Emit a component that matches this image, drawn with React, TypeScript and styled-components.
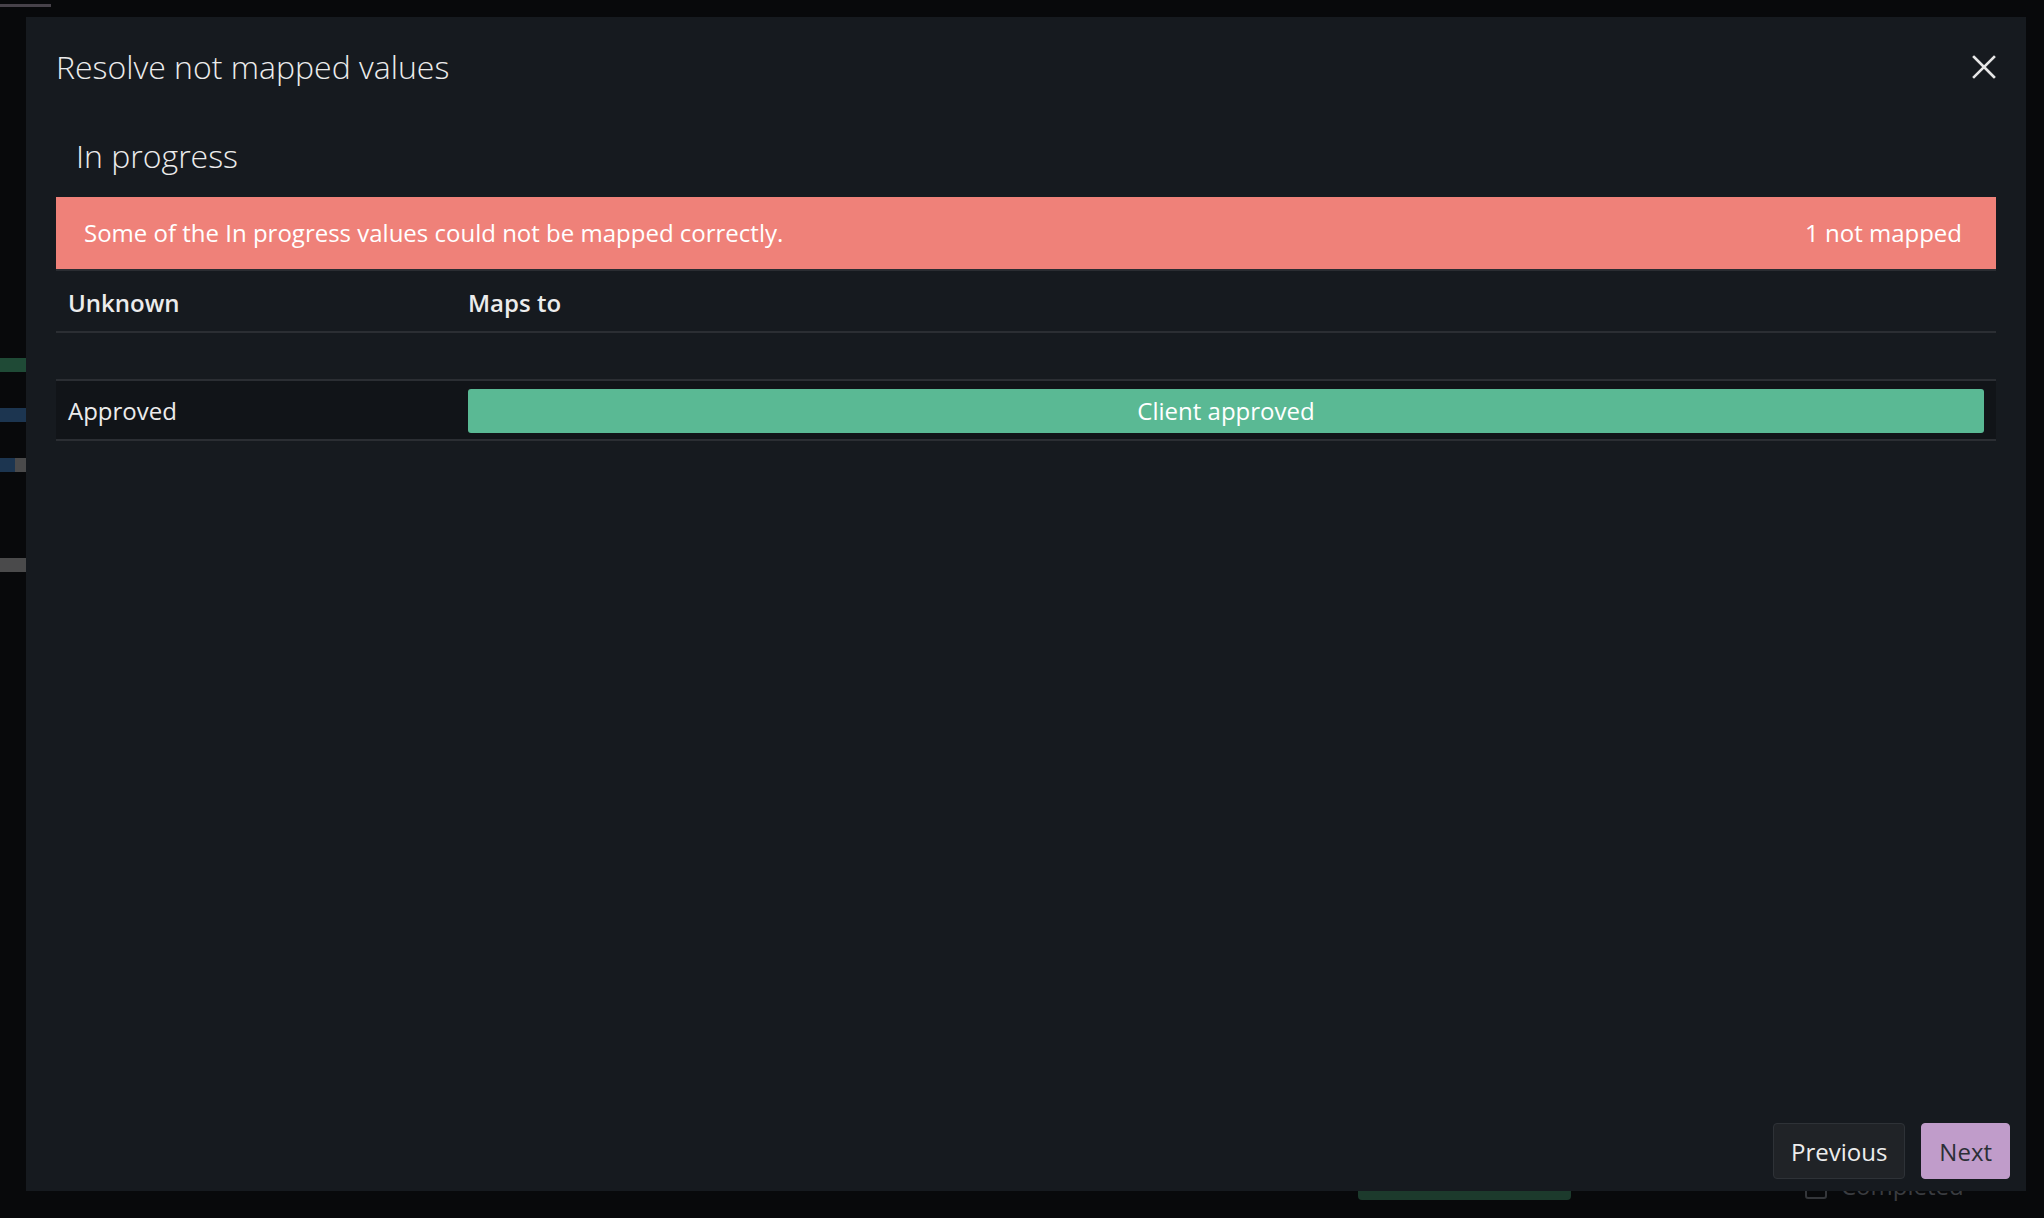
import React from "react";
import styled, { createGlobalStyle } from "styled-components";

const GlobalStyle = createGlobalStyle`
  html, body {
    margin: 0;
    padding: 0;
    width: 2044px;
    height: 1218px;
    overflow: hidden;
    background: #08090b;
    font-family: "Open Sans", "Noto Sans", "Liberation Sans", sans-serif;
  }
  * { box-sizing: border-box; }
`;

/* ---------- dimmed application behind the dialog ---------- */

const Backdrop = styled.div`
  width: 2044px;
  height: 1218px;
  background: #08090b;
  display: flex;
  flex-direction: column;
`;

const TopLine = styled.div`
  width: 51px;
  height: 3px;
  margin-top: 4px;
  background: #47424a;
`;

const BackMain = styled.div`
  flex: 1;
  display: flex;
  flex-direction: column;
  padding-top: 351px;
  gap: 36px;
`;

const GanttBar = styled.div<{ $color: string; $tail?: string }>`
  width: 26px;
  height: 14px;
  background: ${(p) =>
    p.$tail
      ? `linear-gradient(to right, ${p.$color} 0 15px, ${p.$tail} 15px 100%)`
      : p.$color};
  visibility: ${(p) => (p.$color === "none" ? "hidden" : "visible")};
`;

const BackBottom = styled.div`
  height: 27px;
  display: flex;
  align-items: flex-start;
  padding-left: 1358px;
`;

const BackGreen = styled.div`
  width: 213px;
  height: 9px;
  background: #1c3a2c;
  border-radius: 0 0 4px 4px;
`;

const BackCheck = styled.div`
  margin-left: 234px;
  margin-top: -14px;
  width: 22px;
  height: 22px;
  border: 2px solid #34363a;
  border-radius: 3px;
`;

const BackText = styled.div`
  margin-left: 14px;
  font-size: 24px;
  color: #3a3c40;
  line-height: 18px;
  margin-top: -14px;
`;

/* ---------- dialog ---------- */

const Dialog = styled.div`
  position: fixed;
  left: 26px;
  top: 17px;
  width: 2000px;
  height: 1174px;
  background: #161a1f;
  color: #e8e8e8;
  display: flex;
  flex-direction: column;
  padding: 30px 16px 12px 30px;
`;

const Body = styled.div`
  display: flex;
  flex-direction: column;
  padding-right: 14px;
`;

const Header = styled.div`
  height: 40px;
  display: flex;
  align-items: center;
  justify-content: space-between;
`;

const Title = styled.h1`
  margin: 0;
  font-size: 32px;
  line-height: 40px;
  font-weight: 300;
  color: #ececec;
`;

const CloseButton = styled.button`
  width: 24px;
  height: 24px;
  padding: 0;
  border: none;
  background: transparent;
  color: #e6e6e6;
  display: flex;
  cursor: pointer;
`;

const Subtitle = styled.h2`
  margin: 49px 0 0;
  padding-left: 20px;
  font-size: 32px;
  line-height: 40px;
  font-weight: 300;
  color: #ececec;
`;

const Alert = styled.div`
  margin-top: 21px;
  height: 72px;
  background: #ef8179;
  color: #ffffff;
  display: flex;
  align-items: center;
  justify-content: space-between;
  padding: 0 34px 0 28px;
  font-size: 24px;
  line-height: 32px;
`;

const Table = styled.div`
  display: grid;
  grid-template-columns: 400px 1fr;
  border-top: 2px solid #2a2d32;
`;

const HeadCell = styled.div`
  padding: 16px 12px 12px;
  font-size: 24px;
  line-height: 32px;
  font-weight: 600;
  color: #ececec;
  border-bottom: 2px solid #2b2e33;
`;

const EmptyRow = styled.div`
  grid-column: 1 / -1;
  height: 48px;
  border-bottom: 2px solid #2b2e33;
`;

const Cell = styled.div`
  background: #111418;
  padding: 8px 12px 6px;
  min-height: 60px;
  border-bottom: 2px solid #2b2e33;
  display: flex;
  align-items: center;
  font-size: 24px;
  line-height: 32px;
  color: #ececec;
`;

const MapBar = styled.div`
  flex: 1;
  height: 44px;
  border-radius: 3px;
  background: #5ab994;
  color: #ffffff;
  display: flex;
  align-items: center;
  justify-content: center;
  font-size: 24px;
`;

const Footer = styled.div`
  margin-top: auto;
  display: flex;
  justify-content: flex-end;
  gap: 16px;
`;

const Button = styled.button<{ $primary?: boolean }>`
  height: 56px;
  padding: 0 17px;
  border-radius: 4px;
  font-family: "Open Sans", "Noto Sans", sans-serif;
  font-size: 24px;
  cursor: pointer;
  border: 1px solid ${(p) => (p.$primary ? "#c09cca" : "#2e3237")};
  background: ${(p) => (p.$primary ? "#c09cca" : "#202327")};
  color: ${(p) => (p.$primary ? "#2b2f36" : "#ededed")};
`;

const CloseIcon = () => (
  <svg width="24" height="24" viewBox="0 0 24 24" fill="none">
    <path
      d="M2 2 L22 22 M22 2 L2 22"
      stroke="currentColor"
      strokeWidth="2.6"
      strokeLinecap="square"
    />
  </svg>
);

export default function App() {
  return (
    <>
      <GlobalStyle />
      <Backdrop>
        <TopLine />
        <BackMain>
          <GanttBar $color="#1f4a36" />
          <GanttBar $color="#1c3550" />
          <GanttBar $color="#1c3550" $tail="#4a4a4b" />
          <GanttBar $color="none" />
          <GanttBar $color="#4a4a4b" />
        </BackMain>
        <BackBottom>
          <BackGreen />
          <BackCheck />
          <BackText>Completed</BackText>
        </BackBottom>
      </Backdrop>

      <Dialog role="dialog">
        <Body>
          <Header>
            <Title>Resolve not mapped values</Title>
            <CloseButton aria-label="Close">
              <CloseIcon />
            </CloseButton>
          </Header>
          <Subtitle>In progress</Subtitle>
          <Alert>
            <span>Some of the In progress values could not be mapped correctly.</span>
            <span>1 not mapped</span>
          </Alert>
          <Table>
            <HeadCell>Unknown</HeadCell>
            <HeadCell>Maps to</HeadCell>
            <EmptyRow />
            <Cell>Approved</Cell>
            <Cell>
              <MapBar>Client approved</MapBar>
            </Cell>
          </Table>
        </Body>
        <Footer>
          <Button>Previous</Button>
          <Button $primary>Next</Button>
        </Footer>
      </Dialog>
    </>
  );
}
